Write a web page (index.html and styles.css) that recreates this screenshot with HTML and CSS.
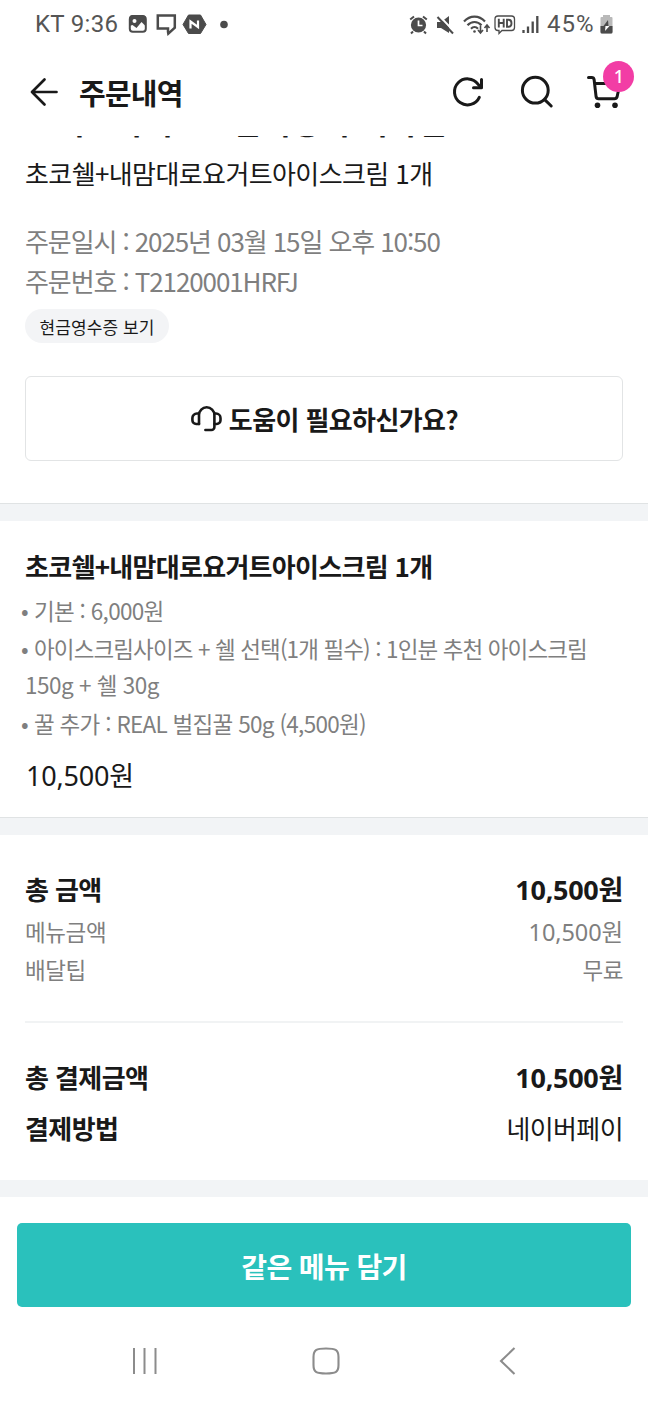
FILE: index.html
```html
<!DOCTYPE html>
<html lang="ko">
<head>
<meta charset="utf-8">
<title>주문내역</title>
<link rel="stylesheet" href="styles.css">
</head>
<body>
<div class="status">
  <span class="clock">KT 9:36</span>
  <svg class="notices" width="110" height="24" viewBox="0 0 110 24" fill="none">
    <rect x="2.800" y="4.200" width="16" height="15.500" rx="3" stroke="#4b4b4b" stroke-width="2"/>
    <path d="M2.500 14V6a3 3 0 0 1 3-3h10a3 3 0 0 1 3 3v8l-4-4-5 6-4-3z" fill="#4b4b4b"/>
    <circle cx="7.500" cy="9" r="2" fill="#fff"/>
    <path d="M41 20v-3.600H30.800V3.600h17v12l-6.500 6z" stroke="#4b4b4b" stroke-width="2.500"/>
    <path d="M61.500 3h12l5.500 9.500-5.500 9h-12l-5.500-9z" fill="#4b4b4b" stroke="#4b4b4b" stroke-linejoin="round"/>
    <path d="M63.500 16.500V9.500l7.500 5.500V8.500" stroke="#fff" stroke-width="2.200"/>
    <circle cx="97" cy="12.500" r="3.800" fill="#4b4b4b"/>
  </svg>
  <svg class="signals" width="138" height="24" viewBox="0 0 138 24" fill="none" stroke="#4b4b4b">
    <circle cx="9.500" cy="13" r="7.600" fill="#4b4b4b" stroke="none"/>
    <path d="M1.200 7.500 5 4.500M17.800 7.500 14 4.500M4 19.500l-2 2M15 19.500l2 2" stroke-width="2"/>
    <path d="M9.500 8.500v5h4" stroke="#fff" stroke-width="1.700"/>
    <path d="M28 10h4l8-6v17l-8-5h-4z" fill="#4b4b4b" stroke="none"/>
    <path d="m29 2.500 17 18" stroke="#fff" stroke-width="2"/>
    <path d="m28.500 5 15.500 16.500" stroke-width="2"/>
    <path d="M55 9.500c6-6.500 15-6.500 21 0M58.500 13.200c4-4.300 10-4.300 14 0M62 16.700c2-2 5-2 7 0" stroke-width="2.200"/>
    <circle cx="65.500" cy="19.500" r="1.300" fill="#4b4b4b" stroke="none"/>
    <path d="M71.500 13.500v7.500m-2.500-3 2.500 3 2.500-3M78 20v-7m-2.500 3 2.500-3 2.500 3" stroke-width="1.600"/>
    <path d="M89 4h13.500a3 3 0 0 1 3 3v8.500a3 3 0 0 1-3 3H93l-3 3v-3h-1a3 3 0 0 1-3-3V7a3 3 0 0 1 3-3z" stroke-width="1.300"/>
    <path d="M89.800 6.800v8.700M94.700 6.800v8.700M89.800 11h5M98 7.700v7h1.500c4 0 4-7 0-7z" stroke-width="1.900"/>
    <path d="M114.500 18v3M119 14.500V21M123.700 9.500V21M128.300 4v17" stroke-width="2.300"/>
  </svg>
  <span class="percent">45%</span>
  <svg class="battery" width="14" height="20" viewBox="0 0 14 20">
    <path d="M4 3V1h7v2h1.500a1 1 0 0 1 1 1v14a1.500 1.500 0 0 1-1.500 1.500H3A1.500 1.500 0 0 1 1.500 18V4a1 1 0 0 1 1-1z" fill="#b9b9b9"/>
    <path d="M1.500 12h12v6a1.500 1.500 0 0 1-1.500 1.500H3A1.500 1.500 0 0 1 1.500 18z" fill="#4b4b4b"/>
    <path d="M9 6 4.500 12h5z" fill="#4b4b4b"/><path d="M6 17l4.500-5h-4z" fill="#fff"/>
  </svg>
</div>

<header class="header">
  <svg class="back" width="30" height="30" viewBox="0 0 30 30" fill="none" stroke="#191919" stroke-width="2.700" stroke-linecap="round" stroke-linejoin="round"><path d="M15.500 2.500 3 15l12.500 12.500M3 15h24.500"/></svg>
  <h1 class="heading">주문내역</h1>
  <div class="tools">
    <svg class="reload" width="34" height="34" viewBox="0 0 34 34" fill="none" stroke="#191919" stroke-width="3" stroke-linecap="round" stroke-linejoin="round"><path d="M28.300 22.300A13 13 0 1 1 27 9.200l3 3"/><path d="M30.500 4.500v8.200h-8"/></svg>
    <svg class="search" width="34" height="34" viewBox="0 0 34 34" fill="none" stroke="#191919" stroke-width="3" stroke-linecap="round"><circle cx="15.300" cy="15.200" r="12.900"/><path d="m24.700 24.700 6.500 6.300"/></svg>
    <div class="cart">
      <svg width="36" height="36" viewBox="0 0 36 36" fill="none" stroke="#191919" stroke-width="3" stroke-linecap="round" stroke-linejoin="round"><path d="M2.500 3.500h3.200q2 0 2.400 2l2 17.300q.4 2 2.400 2h16q2 0 2.600-2L34 9.500H9"/><g fill="#191919" stroke="none"><circle cx="11.500" cy="31.300" r="2.800"/><circle cx="29" cy="31.300" r="2.800"/></g></svg>
      <span class="badge">1</span>
    </div>
  </div>
</header>

<main class="content">
  <section class="summary">
    <h2 class="store">요거트아이스크림의정석 미사점</h2>
    <p class="menu">초코쉘+내맘대로요거트아이스크림 1개</p>
    <div class="meta">
      <p class="date">주문일시 : 2025년 03월 15일 오후 10:50</p>
      <p class="number">주문번호 : T2120001HRFJ</p>
    </div>
    <button class="receipt">현금영수증 보기</button>
    <button class="help">
      <svg width="32" height="28" viewBox="0 0 32 28" fill="none" stroke="#191919" stroke-width="2.600" stroke-linecap="round" stroke-linejoin="round"><path d="M9 19V10a7.700 7.700 0 0 1 15.400 0v12a3 3 0 0 1-3 3h-6"/><path d="M9 8.500H6.900a4.500 4.500 0 0 0-4.500 4.500v2.300a3.700 3.700 0 0 0 3.700 3.700H9M24.500 8.500h1.500a4.500 4.500 0 0 1 4.500 4.500v2.300a3.700 3.700 0 0 1-3.700 3.700h-2.300"/></svg>
      <span>도움이 필요하신가요?</span>
    </button>
  </section>

  <section class="item">
    <h3 class="item-name">초코쉘+내맘대로요거트아이스크림 1개</h3>
    <ul class="options">
      <li><span class="dot">•</span>기본 : 6,000원</li>
      <li><span class="dot">•</span><span class="tight">아이스크림사이즈 + 쉘 선택(1개 필수) : 1인분 추천 아이스크림</span> <span class="loose">150g + 쉘 30g</span></li>
      <li><span class="dot">•</span>꿀 추가 : REAL 벌집꿀 50g (4,500원)</li>
    </ul>
    <p class="price">10,500원</p>
  </section>

  <section class="bill">
    <div class="row total"><span>총 금액</span><span class="amount">10,500원</span></div>
    <div class="row detail first"><span>메뉴금액</span><span class="amount">10,500원</span></div>
    <div class="row detail"><span>배달팁</span><span>무료</span></div>
    <hr class="rule">
    <div class="row total"><span>총 결제금액</span><span class="amount">10,500원</span></div>
    <div class="row total method"><span>결제방법</span><span class="pay">네이버페이</span></div>
  </section>
</main>

<footer class="footer">
  <button class="reorder">같은 메뉴 담기</button>
</footer>

<nav class="softkeys">
  <svg width="28" height="32" viewBox="0 0 28 32" stroke="#8c8c8c" stroke-width="2"><path d="M3 3v26M13.500 3v26M24.500 3v26"/></svg>
  <svg class="home" width="30" height="32" viewBox="0 0 30 32" fill="none" stroke="#8c8c8c" stroke-width="2.100"><path d="M2.500 12C2.500 5 5 3.500 15 3.500S27.500 5 27.500 12v8c0 7-2.500 8.500-12.500 8.500S2.500 27 2.500 20z"/></svg>
  <svg width="20" height="32" viewBox="0 0 20 32" fill="none" stroke="#8c8c8c" stroke-width="2.100"><path d="M17.500 3 4 16l13.500 13"/></svg>
</nav>
</body>
</html>
```
FILE: styles.css
```css
* { box-sizing: border-box; }
body {
  margin: 0;
  width: 648px;
  height: 1404px;
  overflow: hidden;
  display: flex;
  flex-direction: column;
  background: #fff;
  color: #191919;
  font-family: "Noto Sans CJK KR", sans-serif;
  font-size: 26px;
  letter-spacing: -0.6px;
}
h1, h2, h3, p, ul { margin: 0; padding: 0; }
button { font: inherit; letter-spacing: inherit; color: inherit; padding: 0; border: 0; }
svg { display: block; flex: none; }

.status {
  height: 48px;
  padding: 0 35px;
  display: flex;
  align-items: center;
  color: #555;
  font: 24px/48px Roboto, sans-serif;
  letter-spacing: 0;
}
.clock { width: 92px; letter-spacing: 0.3px; }
.signals { margin-left: auto; }
.percent { width: 48px; letter-spacing: 1px; margin-right: 4px; white-space: nowrap; }

.header {
  height: 88px;
  padding: 0 26px 1px 29px;
  display: flex;
  align-items: center;
}
.heading { margin-left: 20px; font-size: 29px; line-height: 40px; letter-spacing: -0.8px; font-weight: 700; }
.tools { margin-left: auto; display: flex; align-items: center; gap: 34px; }
.reload { margin: 0 -1px 0 1px; }
.search { margin: 0 -2px 0 2px; }
.cart { position: relative; }
.badge {
  position: absolute;
  left: 17px;
  top: -13px;
  width: 31px;
  height: 31px;
  border-radius: 50%;
  background: #f23da5;
  color: #fff;
  font: 500 18px/31px "Noto Sans", sans-serif;
  text-align: center;
}

.content { height: 1061px; overflow: hidden; }
.summary { height: 402px; padding: 0 25px; }
.store { margin-top: -35px; padding-left: 1px; font-size: 32px; line-height: 38px; letter-spacing: 0; font-weight: 700; }
.menu { margin-top: 14px; line-height: 40px; letter-spacing: -0.6px; }
.meta { margin-top: 28px; line-height: 40px; color: #7f7f7f; letter-spacing: -1.1px; }
.receipt {
  display: block;
  margin-top: 8px;
  width: 144px;
  height: 34px;
  border-radius: 17px;
  background: #f3f4f6;
  font-size: 17px;
  line-height: 35px;
  letter-spacing: 0.1px;
}
.help {
  margin-top: 33px;
  width: 598px;
  height: 85px;
  border: 1px solid #e2e4e5;
  border-radius: 6px;
  background: #fff;
  display: flex;
  align-items: center;
  justify-content: center;
  gap: 7px;
  font-weight: 700;
  letter-spacing: -0.6px;
}

.item {
  height: 314px;
  padding: 42px 25px 0;
  border-top: 1px solid #e0e3e4;
  box-shadow: inset 0 17px #f2f4f6;
}
.item-name { font-size: 26px; line-height: 40px; font-weight: 700; letter-spacing: -0.7px; }
.options { margin-top: 6px; list-style: none; color: #7f7f7f; font-size: 22.5px; line-height: 36px; letter-spacing: -0.7px; }
.options li + li { margin-top: 2px; }
.options li:last-child { margin-top: 3px; }
.tight { letter-spacing: -0.88px; }
.loose { letter-spacing: -0.5px; }
.dot { display: inline-block; width: 13px; margin-left: -4px; }
.price { margin-top: 15px; padding-left: 1px; font-family: "Noto Sans", "Noto Sans CJK KR", sans-serif; font-size: 27px; line-height: 40px; letter-spacing: -0.2px; }

.bill {
  height: 380px;
  padding: 51px 25px 0;
  border-top: 1px solid #e0e3e4;
  border-bottom: 17px solid #f2f4f6;
  box-shadow: inset 0 17px #f2f4f6;
}
.row { display: flex; justify-content: space-between; line-height: 38px; }
.total { font-weight: 700; line-height: 40px; }
.amount { padding-top: 1px; margin-bottom: -1px; font-family: "Noto Sans", "Noto Sans CJK KR", sans-serif; font-size: 27px; letter-spacing: 0; }
.total .amount { letter-spacing: -0.3px; }
.detail { color: #7f7f7f; font-size: 22.5px; letter-spacing: -0.4px; }
.detail .amount { font-size: 23.5px; letter-spacing: -0.1px; }
.first { margin-top: 3px; }
.rule { height: 2px; margin: 33px 0 34px; border: 0; background: #f1f3f4; }
.method { margin-top: 11px; }
.pay { font-weight: 400; }

.footer { padding: 26px 17px 0; }
.reorder {
  display: block;
  width: 614px;
  height: 84px;
  padding-top: 2px;
  border-radius: 5px;
  background: #2ac1bc;
  color: #fff;
  font-size: 28px;
  font-weight: 700;
}

.softkeys {
  margin-top: 38px;
  padding: 0 131px;
  display: flex;
  justify-content: space-between;
}
.home { margin: 0 2px 0 -2px; }
```
